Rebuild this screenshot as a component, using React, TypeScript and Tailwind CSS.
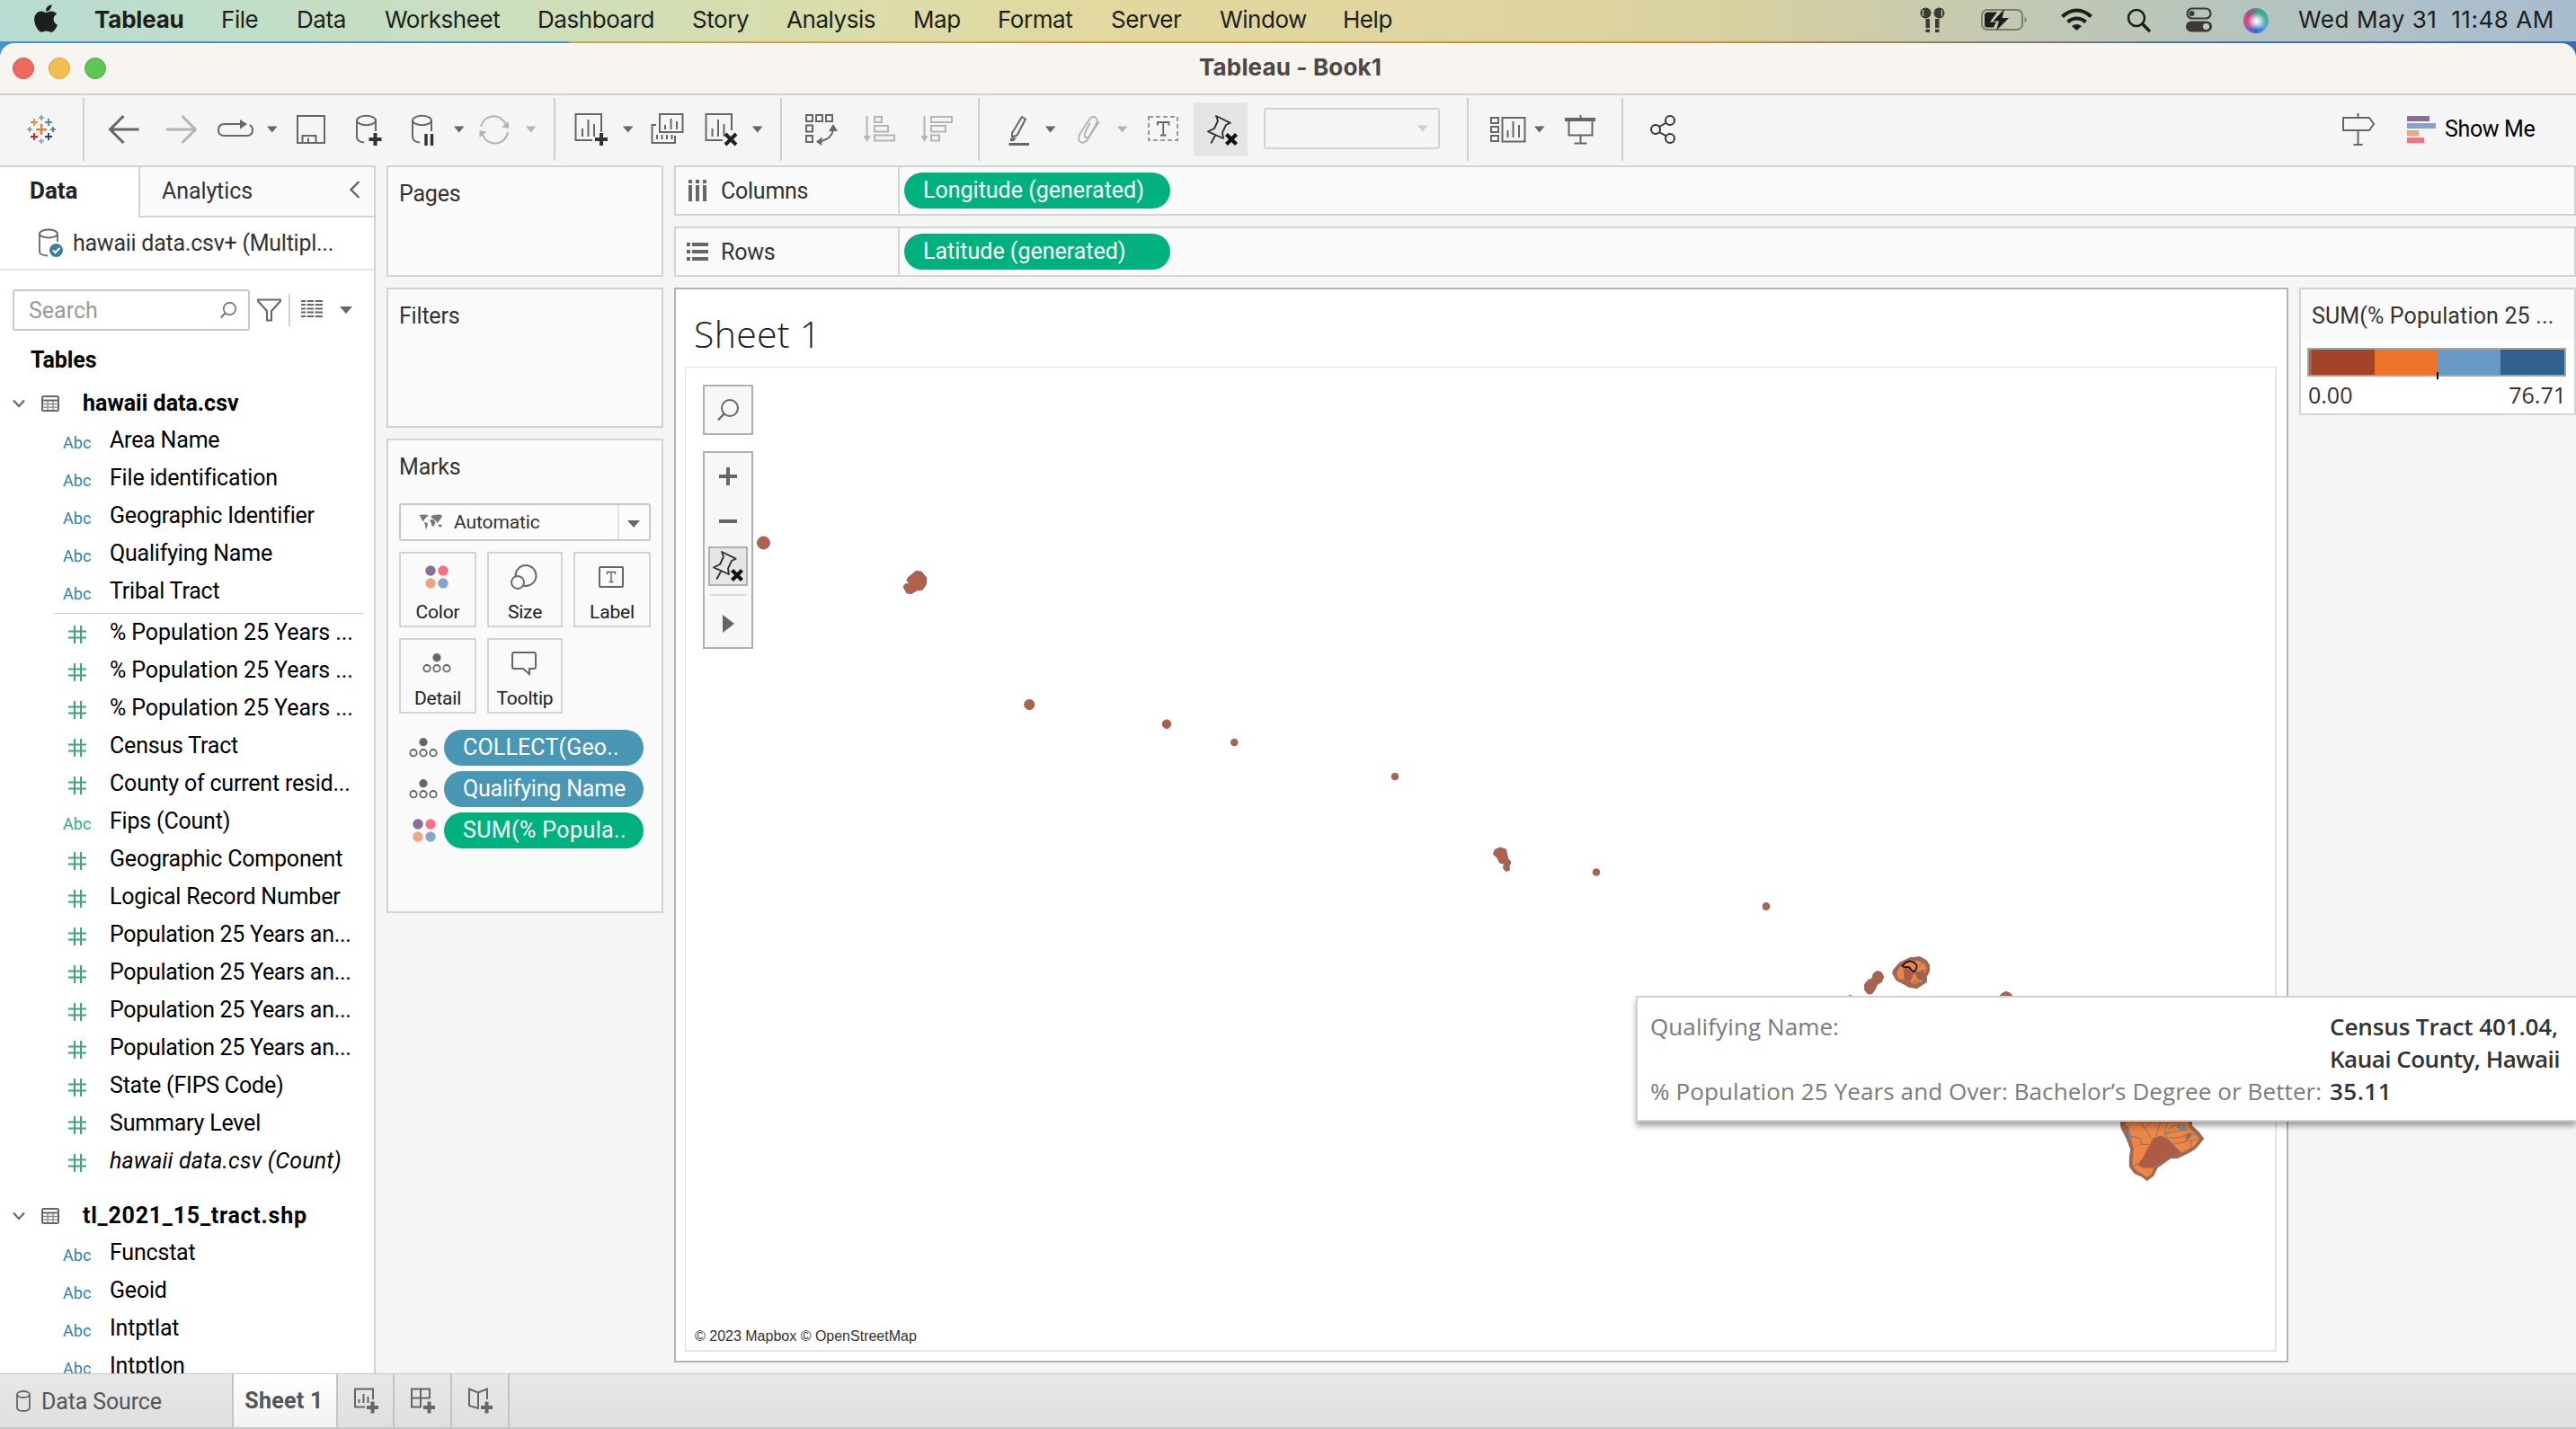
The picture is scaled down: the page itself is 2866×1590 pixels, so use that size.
import React from 'react';
import { FaApple } from 'react-icons/fa';

const ui = "font-['Roboto','Liberation_Sans',sans-serif]";

type IcProps = { x: number; w: number; y?: number; h?: number; c?: string; children: React.ReactNode };

/* Icons are drawn on a window-wide grid; x/y/w/h choose the part of it that the icon covers. */
function Ic({ x, w, y = 124, h = 40, c = '', children }: IcProps) {
  return (
    <svg
      width={w}
      height={h}
      viewBox={`${x} ${y} ${w} ${h}`}
      fill="none"
      stroke="currentColor"
      strokeWidth={2}
      className={`block shrink-0 ${c}`}
    >
      {children}
    </svg>
  );
}

const Caret = ({ c }: { c: string }) => (
  <svg width={14} height={8} viewBox="0 0 14 8" className={`block shrink-0 ${c}`}>
    <path d="M1 0.5H12.5L6.7 7.5Z" fill="currentColor" />
  </svg>
);

const Sep = ({ c }: { c: string }) => <div className={`h-[70px] w-[2px] shrink-0 bg-[#d0d0d0] ${c}`} />;

const Plus = ({ x, y }: { x: number; y: number }) => (
  <path d={`M${x - 7} ${y}H${x + 7}M${x} ${y - 7}V${y + 7}`} stroke="#333" strokeWidth={4} />
);

const PinPaths = () => (
  <>
    <path d="M803 614L818.7 621.7L814 624L810 632.5L811 639L794 631.3L801 628L805 619.5Z" strokeWidth={1.9} strokeLinejoin="round" />
    <path d="M802.5 635L797.3 644.5" strokeWidth={1.9} />
    <path d="M814.5 634.5L825.5 645.5M825.5 634.5L814.5 645.5" stroke="#111" strokeWidth={4.2} />
  </>
);

function MenuBar() {
  const item = 'shrink-0 whitespace-pre';
  return (
    <div
      className="flex h-[46px] shrink-0 items-center bg-[linear-gradient(90deg,#b8dcd2_0%,#c6dfc3_15%,#dbdda9_33%,#e2d89e_44%,#dfd49e_60%,#d6d0a2_68%,#c1c8b4_79%,#b2c3c2_90%,#a7bccf_100%)] font-['Inter',sans-serif] text-[26px] leading-[46px] tracking-[-0.45px] text-[#1d1f1c]"
    >
      <FaApple className="ml-[37px] h-[35px] w-[28px] shrink-0 -translate-y-[3px]" />
      <div className={`${item} ml-[40px] w-[141px] font-bold tracking-[-0.2px] -translate-y-[1px]`}>Tableau</div>
      <div className="flex -translate-y-[1px]">
        <div className={`${item} w-[84px]`}>File</div>
        <div className={`${item} w-[98px]`}>Data</div>
        <div className={`${item} w-[170px]`}>Worksheet</div>
        <div className={`${item} w-[172px]`}>Dashboard</div>
        <div className={`${item} w-[105px]`}>Story</div>
        <div className={`${item} w-[141px]`}>Analysis</div>
        <div className={`${item} w-[94px]`}>Map</div>
        <div className={`${item} w-[126px]`}>Format</div>
        <div className={`${item} w-[121px]`}>Server</div>
        <div className={`${item} w-[137px]`}>Window</div>
        <div className={`${item} w-[64px]`}>Help</div>
      </div>
      <Ic x={2136} w={30} y={0} h={46} c="ml-[578px]">
        <g fill="#3a3b35" stroke="none">
          <ellipse cx="2142.5" cy="14.5" rx="6" ry="6" />
          <ellipse cx="2157.5" cy="14.5" rx="6" ry="6" />
          <path d="M2142.5 21H2147V31H2142.5ZM2153 21H2157.5V31H2153Z" />
          <path d="M2142.5 32.5H2147V36H2142.5ZM2153 32.5H2157.5V36H2153Z" />
        </g>
        <path d="M2139.5 11V18M2160.5 11V18" stroke="#cfcbae" strokeWidth={1.2} />
      </Ic>
      <Ic x={2202} w={56} y={0} h={46} c="ml-[36px]">
        <rect x="2205" y="11" width="45" height="22" rx="6" stroke="#7d7e6c" strokeWidth={2} />
        <path d="M2252.5 18.5Q2257 22 2252.5 25.5Z" fill="#7d7e6c" stroke="none" />
        <path d="M2212 13.5H2222L2214 24.5H2221L2218 30.5H2211Q2208 30.5 2208 27.500V17Q2208 13.500 2212 13.500Z" fill="#1d1f1c" stroke="none" />
        <path d="M2230 10L2217.500 23.500H2224L2221 34L2235 20H2227.500Z" fill="#1d1f1c" stroke="none" />
      </Ic>
      <Ic x={2290} w={42} y={0} h={46} c="ml-[32px]">
        <g stroke="#1d1f1c" strokeWidth={4.2}>
          <path d="M2294.500 18.500Q2302 11.500 2310.500 11.500Q2319 11.500 2326.500 18.500" />
          <path d="M2300.500 24.500Q2305 20.500 2310.500 20.500Q2316 20.500 2320.500 24.500" />
        </g>
        <path d="M2305 29Q2310.500 25 2316 29L2310.500 34Z" fill="#1d1f1c" stroke="none" />
      </Ic>
      <Ic x={2364} w={32} y={0} h={46} c="ml-[32px]">
        <circle cx="2377" cy="20" r="9" stroke="#1d1f1c" strokeWidth={2.6} />
        <path d="M2383.500 26.500L2391 34" stroke="#1d1f1c" strokeWidth={3.400} strokeLinecap="round" />
      </Ic>
      <Ic x={2430} w={34} y={0} h={46} c="ml-[34px]">
        <rect x="2433.500" y="9.500" width="26" height="11" rx="5.500" stroke="#3a3b35" strokeWidth={2.200} />
        <circle cx="2438.500" cy="15" r="3" fill="#3a3b35" stroke="none" />
        <rect x="2432" y="23.500" width="29" height="12" rx="6" fill="#3a3b35" stroke="none" />
        <circle cx="2454.500" cy="29.500" r="3.600" fill="#c3cabb" stroke="none" />
      </Ic>
      <div className="ml-[32px] size-[28px] shrink-0 rounded-full bg-[radial-gradient(circle_at_52%_52%,#ffffff_0%,rgba(255,255,255,0.75)_16%,rgba(255,255,255,0)_48%),conic-gradient(from_0deg,#3b9a86,#4cae9c_20%,#5aa4e0_35%,#2c66d0_50%,#8b5fc0_62%,#e0467e_75%,#b24d80_88%,#3b9a86)]" />
      <div className="ml-[33px] -translate-y-[1px] whitespace-pre tracking-[0.55px]">{'Wed May 31  11:48 AM'}</div>
    </div>
  );
}

function TitleBar() {
  return (
    <div className="shrink-0 bg-[linear-gradient(90deg,#4a93c8_0%,#4a93c8_22%,#c9a857_22.200%,#c98f3a_66%,#3f6fa8_88%,#3a6ca8_100%)] pt-[2px]">
      <div className="flex h-[58px] items-center rounded-t-[16px] border-b-2 border-[#d2d0cd] bg-[#f8f4ef]">
        <div className="ml-[14px] flex gap-[16px]">
          <div className="size-[24px] rounded-full border border-[#d2564b] bg-[#ec6a5e]" />
          <div className="size-[24px] rounded-full border border-[#d9a13e] bg-[#f5bf4f]" />
          <div className="size-[24px] rounded-full border border-[#4fa73f] bg-[#61c554]" />
        </div>
        <div className="ml-[1216px] pb-[3px] font-['Inter',sans-serif] text-[26px] font-bold tracking-[0.15px] whitespace-pre text-[#4b4845]">Tableau - Book1</div>
      </div>
    </div>
  );
}

function SheetBars({ x }: { x: number }) {
  return <path d={`M${x} 143V152M${x + 6.5} 133V152M${x + 13} 138V152`} />;
}

function Toolbar() {
  const g = 'text-[#666]';
  const l = 'text-[#b4b4b4]';
  const cross = (x: number, y: number, col: string, k: string) => (
    <path key={k} d={`M${x - 4} ${y}H${x + 4}M${x} ${y - 4}V${y + 4}`} stroke={col} strokeWidth={1.9} />
  );
  return (
    <div className="flex h-[78px] shrink-0 items-center bg-[#f5f5f5] pb-[2px] text-[#666]">
      <Ic x={29} w={34} c="ml-[29px]">
        <path d="M40 144H52M46 138V150" stroke="#e8762c" strokeWidth={2.2} />
        {cross(38, 136, '#eb912b', 'a')}
        {cross(54, 136, '#59879b', 'b')}
        {cross(38, 152, '#c72037', 'c')}
        {cross(54, 152, '#1f447e', 'd')}
        <path d="M43 131H49M46 128V134M30 144H36M33 141V147" stroke="#7199a6" strokeWidth={1.6} />
        <path d="M43 157H49M46 154V160" stroke="#8e9bbf" strokeWidth={1.6} />
        <path d="M56 144H62M59 141V147" stroke="#5b6591" strokeWidth={1.6} />
      </Ic>
      <Sep c="ml-[29px]" />
      <Ic x={120} w={36} c="ml-[26px]"><path d="M154.500 144H123M137.500 129L122.500 144L137.500 159" strokeWidth={3} /></Ic>
      <Ic x={184} w={36} c={`ml-[28px] ${l}`}><path d="M185 144H217M202.500 129L217.500 144L202.500 159" strokeWidth={3} /></Ic>
      <Ic x={240} w={44} c="ml-[20px]">
        <path d="M267 138H250Q243 138 243 144.500Q243 151 250 151H274Q281 151 281 144.500Q281 141 278 139" />
        <path d="M267 133L275 138L267 143.500Z" fill="currentColor" stroke="none" />
      </Ic>
      <Caret c="ml-[12px]" />
      <Ic x={330} w={32} c="ml-[20px]">
        <path d="M331 129H361V159H331Z" />
        <path d="M336.500 159V151H351.500V159M343 159V153.500" />
      </Ic>
      <Ic x={396} w={30} c="ml-[34px]">
        <ellipse cx="407.500" cy="134" rx="10.500" ry="5.200" />
        <path d="M397 134V152Q397 158 405 158.500M418 134V146" />
        <Plus x={417.500} y={155} />
      </Ic>
      <Ic x={458} w={26} c="ml-[32px]">
        <ellipse cx="469.500" cy="134" rx="10.500" ry="5.200" />
        <path d="M459 134V152Q459 158 467 158.500M480 134V146" />
        <path d="M474 149V162M480.500 149V162" stroke="#333" strokeWidth={3.400} />
      </Ic>
      <Caret c="ml-[20px]" />
      <Ic x={532} w={36} c={`ml-[14px] ${l}`}>
        <path d="M535 141A14.500 14.500 0 0 1 562.500 138M565 147A14.500 14.500 0 0 1 537 150" />
        <path d="M558 141.500L566 135V143ZM541.500 146.500L533.500 145V153Z" fill="currentColor" stroke="none" />
      </Ic>
      <Caret c={`ml-[16px] ${l}`} />
      <Sep c="ml-[18px]" />
      <Ic x={638} w={40} c="ml-[20px]">
        <path d="M659 156H640.500V127H669V147" /><SheetBars x={648} />
        <Plus x={669} y={155} />
      </Ic>
      <Caret c="ml-[14px]" />
      <Ic x={724} w={38} c="ml-[18px]">
        <path d="M734 127H759.500V147H734ZM730 139H725.500V159H751V151" />
        <path d="M740 139V144M746.500 132V144M753 135V144M731 150V155M736.500 150V155M742 150V155M747.500 150V155" />
      </Ic>
      <Ic x={784} w={38} c="ml-[22px]">
        <path d="M804 156H785.500V127H814V145" /><SheetBars x={792.500} />
        <path d="M807 149L819 161M819 149L807 161" stroke="#222" strokeWidth={4} />
      </Ic>
      <Caret c="ml-[14px]" />
      <Sep c="ml-[18px]" />
      <Ic x={894} w={40} c="ml-[24px]">
        <path d="M897 128H904V135H897ZM908 128H915V135H908ZM919 128H926V135H919ZM897 139.500H904V146.500H897ZM897 151H904V158H897Z" />
        <path d="M927 143Q926 155 912 157" />
        <path d="M922 146L927 138L932 146ZM915 152.500L908 157.500L914 162Z" fill="currentColor" stroke="none" />
      </Ic>
      <Ic x={960} w={38} c={`ml-[26px] ${l}`}>
        <path d="M964.500 129V154M973 130H981V136H973ZM973 140H988V146.500H973ZM973 150.500H995V156.500H973Z" />
        <path d="M960.500 151H968.500L964.500 158Z" fill="currentColor" stroke="none" />
      </Ic>
      <Ic x={1024} w={38} c={`ml-[26px] ${l}`}>
        <path d="M1028.500 129V154M1036 130H1059V136H1036ZM1036 140H1052V146.500H1036ZM1036 150.500H1045V156.500H1036Z" />
        <path d="M1024.500 151H1032.500L1028.500 158Z" fill="currentColor" stroke="none" />
      </Ic>
      <Sep c="ml-[26px]" />
      <Ic x={1122} w={24} c="ml-[32px]">
        <path d="M1137 130L1141 132.500L1131.500 150.500L1126 152.500L1126 148Z" strokeLinejoin="round" />
        <path d="M1124 154L1131 153L1128 157L1124 157Z" fill="currentColor" stroke="none" />
        <path d="M1122.500 160.500H1145" strokeWidth={3} />
      </Ic>
      <Caret c="ml-[16px]" />
      <Ic x={1198} w={28} c={`ml-[22px] ${l}`}>
        <path d="M1212.500 137L1207 148Q1205.500 152.500 1208.500 153Q1211 153.500 1212.500 150.500L1219.500 138Q1222 132 1218.500 130.500Q1214.500 129 1212 133L1202 148Q1198 156 1202 158Q1206 160 1209.500 156L1222.500 136" strokeLinecap="round" strokeWidth={1.900} />
      </Ic>
      <Caret c={`ml-[16px] ${l}`} />
      <Ic x={1276} w={36} c="ml-[20px]">
        <path d="M1278 130H1310V156H1278Z" strokeDasharray="5 3" stroke="#999" />
        <path d="M1288 139.500V136H1300.500V139.500M1294.200 136V150.500M1291 150.500H1297.500" strokeWidth={1.800} />
      </Ic>
      <div className="ml-[16px] flex h-[60px] w-[60px] shrink-0 items-center justify-center bg-[#e5e5e5] text-[#333]">
        <Ic x={786} w={44} y={607} h={44}><PinPaths /></Ic>
      </div>
      <div className="ml-[18px] flex h-[46px] w-[196px] shrink-0 -translate-y-[1px] items-center justify-end rounded-[3px] border-2 border-[#d3d3d3] pr-[10px]">
        <Caret c="text-[#cfcfcf]" />
      </div>
      <Sep c="ml-[30px]" />
      <Ic x={1658} w={40} c="ml-[24px]">
        <path d="M1659 131H1667V137H1659ZM1659 141H1667V147H1659ZM1659 151H1667V157H1659ZM1671.500 131H1696.500V157.500H1671.500Z" />
        <path d="M1677.500 145V153M1683.500 135V153M1690 139V153" />
      </Ic>
      <Caret c="ml-[8px]" />
      <Ic x={1740} w={36} c="ml-[20px]">
        <path d="M1741 133H1775" strokeWidth={4} />
        <path d="M1745.500 135V150.500H1771.500V135M1758.500 128V133M1758.500 151V159M1751.500 159.500H1765.500" />
      </Ic>
      <Sep c="ml-[28px]" />
      <Ic x={1836} w={30} c="ml-[30px] text-[#333]">
        <circle cx="1842" cy="144" r="5" /><circle cx="1858" cy="134" r="5" /><circle cx="1858" cy="154" r="5" />
        <path d="M1846 141L1854 136.500M1846 147L1854 151.500" />
      </Ic>
      <Ic x={2606} w={38} c={`ml-[740px] ${g}`}>
        <path d="M2607 131H2636L2641 138L2636 145H2607ZM2623.500 126V131M2623.500 145V161M2618.500 161H2628.500" />
      </Ic>
      <div className="ml-[34px] flex flex-col gap-[2px]">
        <div className="h-[6px] w-[25px] bg-[#876f99]" />
        <div className="h-[6px] w-[32px] bg-[#83a4cb]" />
        <div className="h-[6px] w-[13px] bg-[#f2a57d]" />
        <div className="h-[6px] w-[19px] bg-[#f97080]" />
      </div>
      <div className={`${ui} ml-[10px] whitespace-nowrap text-[25px] tracking-[-0.35px] text-black`}>Show Me</div>
    </div>
  );
}

const Cyl = () => (
  <svg width={28} height={34} viewBox="0 0 28 34" fill="none" stroke="#666" strokeWidth={1.8} className="block shrink-0">
    <ellipse cx="11" cy="6" rx="10" ry="4.500" />
    <path d="M1 6V26Q1 30 10 30.500M21 6V15" />
    <circle cx="19.500" cy="24.500" r="7.500" fill="#3a7fa0" stroke="none" />
    <path d="M16 24.500L18.500 27L23.500 22" stroke="#fff" strokeWidth={2} />
  </svg>
);

const Mag = ({ s }: { s: number }) => (
  <svg width={s} height={s} viewBox="0 0 24 24" fill="none" stroke="#666" strokeWidth={2} className="block shrink-0">
    <circle cx="14" cy="10" r="9" />
    <path d="M7.500 16.500L1 23.300" strokeWidth={2.400} />
  </svg>
);

function TableHead({ name }: { name: string }) {
  return (
    <div className="flex h-[42px] items-center">
      <svg width={14} height={10} viewBox="0 0 14 10" fill="none" stroke="#666" strokeWidth={2.2} className="ml-[14px] block shrink-0"><path d="M1 1.500L7 8L13 1.500" /></svg>
      <svg width={20} height={18} viewBox="0 0 20 18" fill="none" stroke="#666" className="ml-[18px] block shrink-0">
        <rect x="1" y="1" width="18" height="16" rx="1.500" strokeWidth={2} />
        <path d="M1 5.500H19" strokeWidth={2} />
        <path d="M2 9.500H18M2 13.200H18M7 6V16M13 6V16" strokeWidth={1.300} stroke="#888" />
      </svg>
      <div className="ml-[26px] whitespace-nowrap text-[25px] font-bold text-black">{name}</div>
    </div>
  );
}

function Field({ t, name, green }: { t: 'abc' | '#'; name: string; green?: boolean }) {
  let track = 'tracking-[-0.2px]';
  if (name.startsWith('Population')) track = 'tracking-[-0.3px]';
  if (name.startsWith('%')) track = 'tracking-[-0.1px]';
  if (name === 'hawaii data.csv (Count)') track = 'tracking-[0.15px] italic';
  return (
    <div className="flex h-[42px] items-center">
      <div className="ml-[70px] flex w-[52px] shrink-0">
        {t === 'abc' ? (
          <span className={green ? 'mt-[4px] text-[18px] tracking-[0.1px] text-[#3aa873]' : 'mt-[4px] text-[18px] tracking-[0.1px] text-[#3a7fa0]'}>Abc</span>
        ) : (
          <svg width={20} height={20} viewBox="0 0 20 20" fill="none" stroke="#3aa873" strokeWidth={2} className="mt-[3px] ml-[6px] block">
            <path d="M7 0V20M14 0V20M0 6.500H20M0 13.500H20" />
          </svg>
        )}
      </div>
      <div className={`whitespace-nowrap text-[25px] ${track}`}>{name}</div>
    </div>
  );
}

function DataPane() {
  const measures = [
    '% Population 25 Years ...', '% Population 25 Years ...', '% Population 25 Years ...', 'Census Tract', 'County of current resid...', 'Fips (Count)',
    'Geographic Component', 'Logical Record Number', 'Population 25 Years an...', 'Population 25 Years an...', 'Population 25 Years an...',
    'Population 25 Years an...', 'State (FIPS Code)', 'Summary Level', 'hawaii data.csv (Count)',
  ];
  return (
    <div className={`${ui} h-[1344px] w-[418px] shrink-0 overflow-hidden border-t-2 border-r-2 border-[#d3d3d3] bg-white text-[25px] text-black`}>
      <div className="flex h-[56px]">
        <div className="w-[154px] pt-[10px] pl-[33px] text-[26px] leading-[32px] font-bold text-[#222]">Data</div>
        <div className="flex flex-1 border-b-2 border-l-2 border-[#d3d3d3] bg-[#fafafa] pt-[11px] pl-[24px] leading-[32px] tracking-[-0.1px] text-[#333]">
          <div className="w-[209px]">Analytics</div>
          <svg width={12} height={20} viewBox="0 0 12 20" fill="none" stroke="#666" strokeWidth={2.400} className="mt-[4px] block"><path d="M10.500 1L1.500 10L10.500 19" /></svg>
        </div>
      </div>
      <div className="flex h-[59px] items-center border-b-2 border-[#e3e3e3] text-[#333]">
        <div className="ml-[43px]"><Cyl /></div>
        <div className="ml-[10px] whitespace-nowrap tracking-[-0.25px]">hawaii data.csv+ (Multipl...</div>
      </div>
      <div className="mt-[21px] flex h-[46px] items-center">
        <div className="ml-[14px] flex h-[46px] w-[264px] shrink-0 items-center justify-between rounded-[3px] border-2 border-[#c8c8c8] pr-[13px] pl-[16px] text-[#9a9a9a]">
          <span className="pt-[2px]">Search</span> <Mag s={18} />
        </div>
        <svg width={27} height={26} viewBox="0 0 27 26" fill="none" stroke="#666" strokeWidth={2} strokeLinejoin="round" className="ml-[8px] block shrink-0"><path d="M1 1.500H26V3L16 14V24.500H11V14L1 3Z" /></svg>
        <div className="ml-[8px] h-[36px] w-[2px] bg-[#d0d0d0]" />
        <svg width={24} height={19} viewBox="0 0 24 19" stroke="#666" strokeWidth={2} className="-mt-[4px] ml-[12px] block shrink-0">
          <path d="M0 1H24M0 5H24M0 9.500H24M0 13.500H24M0 18H24" strokeDasharray="5 1.500 7.500 1.500 8.500 99" />
        </svg>
        <svg width={14} height={8} viewBox="0 0 14 8" className="ml-[19px] block shrink-0"><path d="M0 0H14L7 8Z" fill="#666" /></svg>
      </div>
      <div className="mt-[17px] ml-[34px] leading-[32px] font-bold tracking-[-0.1px]">Tables</div>
      <div className="mt-[11px]"><TableHead name="hawaii data.csv" /></div>
      <div className="-mt-[1px]">
        <Field t="abc" name="Area Name" />
        <Field t="abc" name="File identification" />
        <Field t="abc" name="Geographic Identifier" />
        <Field t="abc" name="Qualifying Name" />
        <Field t="abc" name="Tribal Tract" />
      </div>
      <div className="mt-[3px] ml-[60px] h-[1px] w-[345px] bg-[#d0d0d0]" />
      {measures.map((m, i) => (
        <Field key={i} t={m === 'Fips (Count)' ? 'abc' : '#'} green name={m} />
      ))}
      <div className="mt-[19px] tracking-[0.75px]"><TableHead name="tl_2021_15_tract.shp" /></div>
      <div className="-mt-[1px]">
        <Field t="abc" name="Funcstat" />
        <Field t="abc" name="Geoid" />
        <Field t="abc" name="Intptlat" />
        <Field t="abc" name="Intptlon" />
      </div>
    </div>
  );
}

const Dots = () => (
  <svg width={26} height={26} viewBox="0 0 26 26" className="block shrink-0">
    <circle cx="6" cy="6" r="5.700" fill="#876f99" /><circle cx="20" cy="6" r="5.700" fill="#f97080" />
    <circle cx="6" cy="20" r="5.700" fill="#f2a57d" /><circle cx="20" cy="20" r="5.700" fill="#83a4cb" />
  </svg>
);

const Detail = () => (
  <svg width={32} height={22} viewBox="0 0 32 22" fill="none" stroke="#666" strokeWidth={1.800} className="block shrink-0">
    <circle cx="16" cy="4.700" r="4.600" fill="#666" stroke="none" />
    <circle cx="5" cy="16.700" r="3.700" /><circle cx="16" cy="16.700" r="3.700" /><circle cx="27" cy="16.700" r="3.700" />
  </svg>
);

function MarkButton({ label, w, children }: { label: string; w: string; children: React.ReactNode }) {
  return (
    <div className={`${w} flex h-[84px] flex-col items-center border-2 border-[#d3d3d3] bg-[#fafafa]`}>
      <div className="flex h-[52px] items-center justify-center pr-[2px]">{children}</div>
      <div className="text-[21px] leading-[26px] text-[#222]">{label}</div>
    </div>
  );
}

function Pill({ c, children }: { c: string; children: React.ReactNode }) {
  return <div className={`${c} flex h-[40px] items-center rounded-full pl-[21px] whitespace-nowrap text-white`}>{children}</div>;
}

function Cards() {
  const card = 'border-2 border-[#d3d3d3] bg-[#fafafa] pt-[14px] pl-[12px] leading-[32px]';
  return (
    <div className={`${ui} ml-[12px] flex w-[308px] shrink-0 flex-col gap-[12px] text-[25px] tracking-[-0.2px] text-[#333]`}>
      <div className={`${card} h-[124px]`}>Pages</div>
      <div className={`${card} h-[156px]`}>Filters</div>
      <div className={`${card} h-[528px]`}>
        Marks
        <div className="mt-[24px] flex h-[42px] w-[280px] items-center rounded-[3px] border-2 border-[#c8c8c8] bg-[#fcfcfc]">
          <svg width={27} height={18} viewBox="0 0 27 18" fill="#777" className="ml-[20px] block shrink-0">
            <path d="M0 1L7 0.500L11 1.500L8 4L6 6L5 8.500L3 6L2 3ZM6 9L10 10L9.500 13L8 17.500L7 13ZM13 3L16 1L24 0.500L26 2L24.500 5L22 8L20.500 10.500L19 7.500L16 5.500ZM12 6.500L16 6L18.500 9L16.500 14L14.500 13L13.500 9.500ZM21.500 12L25 11.500L25.500 14.500L22 14Z" />
          </svg>
          <div className="ml-[12px] w-[182px] text-[21px] tracking-[-0.1px]">Automatic</div>
          <div className="h-full w-[2px] bg-[#e0e0e0]" />
          <svg width={14} height={8} viewBox="0 0 14 8" className="mt-[4px] ml-[9px] block shrink-0"><path d="M0 0H14L7 8Z" fill="#666" /></svg>
        </div>
        <div className="mt-[12px] flex gap-[12px]">
          <MarkButton label="Color" w="w-[86px]"><Dots /></MarkButton>
          <MarkButton label="Size" w="w-[84px]">
            <svg width={30} height={28} viewBox="0 0 30 28" fill="none" stroke="#666" strokeWidth={1.900} className="block">
              <circle cx="17" cy="12.500" r="11.500" /><circle cx="8" cy="20" r="7" fill="#fafafa" />
            </svg>
          </MarkButton>
          <MarkButton label="Label" w="w-[86px]">
            <svg width={28} height={24} viewBox="0 0 28 24" fill="none" stroke="#666" strokeWidth={2} className="block">
              <rect x="1" y="1" width="26" height="22" rx="1" />
              <path d="M9.500 9V6.500H18.500V9M14 6.500V17.500M11.500 17.500H16.500" strokeWidth={1.500} />
            </svg>
          </MarkButton>
        </div>
        <div className="mt-[12px] flex gap-[12px]">
          <MarkButton label="Detail" w="w-[86px]"><Detail /></MarkButton>
          <MarkButton label="Tooltip" w="w-[84px]">
            <svg width={28} height={27} viewBox="0 0 28 27" fill="none" stroke="#666" strokeWidth={2} className="block">
              <path d="M3 1H25Q27 1 27 3V17Q27 19 25 19H20V25L13 19H3Q1 19 1 17V3Q1 1 3 1Z" />
            </svg>
          </MarkButton>
        </div>
        <div className="mt-[18px] flex flex-col gap-[6px]">
          <div className="flex items-center gap-[7px] pl-[11px]"><Detail /><Pill c="w-[222px] bg-[#4a96b5] tracking-[0.15px]">COLLECT(Geo..</Pill></div>
          <div className="flex items-center gap-[7px] pl-[11px]"><Detail /><Pill c="w-[222px] bg-[#4a96b5]">Qualifying Name</Pill></div>
          <div className="flex items-center gap-[9px] pl-[15px]"><Dots /><Pill c="w-[222px] bg-[#00b180] tracking-[0.4px]">SUM(% Popula..</Pill></div>
        </div>
      </div>
    </div>
  );
}

function Shelf({ icon, label, pill }: { icon: React.ReactNode; label: string; pill: string }) {
  return (
    <div className={`${ui} flex h-[56px] items-center border-2 border-[#d3d3d3] bg-[#fafafa] text-[25px]`}>
      <div className="flex h-full w-[249px] items-center border-r-2 border-[#d3d3d3] text-[#333]">
        <div className="ml-[12px] w-[38px]">{icon}</div>
        <div className="pt-[2px] tracking-[-0.25px]">{label}</div>
      </div>
      <div className="ml-[5px]"><Pill c="w-[296px] bg-[#00b180]">{pill}</Pill></div>
    </div>
  );
}

function Islands() {
  const dots: [number, number, number][] = [
    [849.5, 604, 7], [1145.3, 784, 5.6], [1298, 805.7, 4.8], [1373.3, 826, 3.8], [1552, 864, 3.8], [1776, 970.5, 3.8], [1965, 1008.5, 4],
  ];
  return (
    <svg width={1768} height={1094} viewBox="763 409 1768 1094" className="absolute inset-0 block" stroke="#7a7068" strokeWidth={1} fill="#b2604a">
      {dots.map(([x, y, r]) => <circle key={x} cx={x} cy={y} r={r} />)}
      <path d="M1019 635.500L1025 636L1031 643L1030 651L1026 656.500L1020 657L1014 660.500L1009 660L1005 653L1007.500 649.500L1012 650L1009 646L1010 643Z" />
      <path d="M1669 943L1675.500 945L1677.500 955L1681 959L1679 964L1679.500 968L1675.500 969.500L1672.500 966L1673.500 961L1668.500 960L1665.500 954L1661.500 950.500L1663 945.500Z" />
      <g transform="translate(2030 1040) scale(0.33333)" strokeWidth={3}>
        <path d="M176 121L190 126L197 141L190 158L176 166L167 185L158 197L145 198L134 185L134 165L145 152L158 147L163 130Z" />
        <path d="M181 136L184 150L168 162L160 180L150 188L146 175L154 162L170 155L174 140Z" fill="none" />
        <path d="M285 77L318 74L340 86L350 102L349 124L341 138L340 158L308 179L280 174L265 165L240 152L227 130L230 117L250 94Z" />
        <path d="M290 86L316 87L335 98L341 112L332 135L325 158L305 169L288 160L265 152L245 147L240 130L247 110L262 98Z" fill="#ec8545" strokeWidth={2} />
        <path d="M264 105L275 106L298 124L283 160L266 150Z" fill="#ae5b46" strokeWidth={2} />
        <path d="M298 124L330 122L334 135L328 152L312 148Z" fill="#ae5b46" strokeWidth={2} />
        <path d="M298 124L328 95M298 124L283 160M310 140L334 132M305 150L304 168M312 128L330 145M320 120L335 118M292 158L322 160M314 152V166" fill="none" strokeWidth={2.400} />
        <path d="M259 104L272 92L284 88L298 92L308 103L305 116L298 124L290 117L281 107L265 108Z" fill="#ec8545" stroke="#000" strokeWidth={4.500} />
        <path d="M78 206Q85 198 93 206ZM584 206L592 196L606 190L620 196L628 206Z" />
        <path d="M985 590L1222 590L1226 638L1250 660L1265 681L1240 712L1222 724L1180 745L1155 746L1110 778L1098 804L1076 821L1060 808L1034 796L1018 774L1018 745L1022 716L1008 680L990 645Z" />
        <path d="M1000 590L1214 590L1218 645L1238 664L1254 683L1230 710L1190 730L1155 738L1100 778L1092 800L1076 811L1040 788L1026 772L1030 715L1018 670L1004 640Z" fill="#ec8545" strokeWidth={2} />
        <path d="M1120 673L1135 677L1155 692L1165 705L1190 727L1155 738L1095 778L1062 777L1045 767L1062 748L1070 730L1090 696L1097 680Z" fill="#ae5b46" strokeWidth={2} />
        <path d="M1026 774L1045 765M1056 625L1068 645L1090 680M1068 645L1090 625M1120 625L1106 675M1145 625L1134 665L1150 690M1134 665L1180 655L1215 650M1150 690L1165 700L1205 690L1252 683M1165 700L1170 712M1205 690L1215 665L1240 668M1225 685L1222 715M1190 630L1160 640L1140 665M1016 672L1058 680L1054 700L1090 700M1150 680L1190 676L1222 660" fill="none" strokeWidth={2.600} />
        <path d="M1178 640L1200 636L1205 648L1188 652ZM1012 655L1022 668L1024 682L1015 676Z" fill="#6899c4" strokeWidth={2} />
        <path d="M1205 672L1222 662L1222 675L1208 684ZM1002 636L1014 642L1016 662L1006 650Z" fill="#b2604a" strokeWidth={2} />
      </g>
    </svg>
  );
}

function Worksheet() {
  return (
    <div className="flex h-[1196px] w-[1796px] shrink-0 flex-col border-2 border-[#b3b3b3] bg-white">
      <div className="h-[86px] pt-[22px] pl-[20px] font-['Open_Sans',sans-serif] text-[41px] leading-[54px] font-light tracking-[0.3px] text-[#222]">Sheet 1</div>
      <div className="relative ml-[10px] flex h-[1096px] w-[1771px] flex-col border-t border-r-2 border-b-2 border-l border-[#e4e4e4]">
        <Islands />
        <div className="relative mt-[19px] ml-[19px] flex size-[56px] items-center justify-center border-2 border-[#b0b0b0] bg-[#f7f7f7]"><Mag s={24} /></div>
        <div className="relative mt-[18px] ml-[19px] flex h-[220px] w-[56px] flex-col items-center border-2 border-[#b0b0b0] bg-[#f7f7f7]">
          <svg width={20} height={20} viewBox="0 0 20 20" stroke="#666" strokeWidth={4} className="mt-[16px] block"><path d="M0 10H20M10 0V20" /></svg>
          <div className="mt-[38px] h-[4px] w-[20px] bg-[#666]" />
          <div className="mt-[26px] flex size-[44px] items-center justify-center border-2 border-[#b0b0b0] bg-[#e6e6e6] text-[#333]">
            <Ic x={790} w={40} y={610} h={40}><PinPaths /></Ic>
          </div>
          <div className="mt-[9px] h-[2px] w-[40px] bg-[#dcdcdc]" />
          <svg width={13} height={20} viewBox="0 0 13 20" className="mt-[21px] block"><path d="M0 0L13 10L0 20Z" fill="#666" /></svg>
        </div>
        <div className="mt-auto mb-[5px] ml-[10px] font-['Liberation_Sans',sans-serif] text-[16px] leading-[20px] text-[#333]">© 2023 Mapbox © OpenStreetMap</div>
      </div>
    </div>
  );
}

function Legend() {
  return (
    <div className="h-[142px] w-[308px] shrink-0 border-2 border-[#d3d3d3] bg-white text-[#333]">
      <div className={`${ui} h-[58px] bg-[#fafafa] pt-[14px] pl-[12px] text-[25px] leading-[32px] tracking-[0.15px] whitespace-nowrap`}>SUM(% Population 25 ...</div>
      <div className="relative mt-[7px] ml-[7px] flex h-[32px] w-[288px] border-2 border-[#aaa695]">
        <div className="w-[3px] bg-[#b2604a]" />
        <div className="w-[70px] bg-[#a3432a]" />
        <div className="w-[70px] bg-[#ec7329]" />
        <div className="w-[70px] bg-[#6899c4]" />
        <div className="flex-1 bg-[#32618e]" />
        <div className="absolute top-[25px] left-[142px] h-[8px] w-[2px] bg-black" />
      </div>
      <div className="flex justify-between pt-[2px] pr-[9px] pl-[8px] font-['Open_Sans',sans-serif] text-[25px] leading-[36px]"><span>0.00</span><span>76.71</span></div>
    </div>
  );
}

function BottomBar() {
  const cell = 'flex h-full items-center justify-center border-r-2 border-[#c4c4c4] pl-[2px]';
  const pl = <path d="M15 22H28M21.500 15.500V28.500" strokeWidth={4} />;
  return (
    <div className={`${ui} flex h-[62px] shrink-0 items-start border-t border-b-2 border-[#c6c6c6] bg-[linear-gradient(180deg,#e8e8e8,#dfdfdf)] text-[25px] text-[#555]`}>
      <div className="flex h-full w-[260px] items-center border-r-2 border-[#c4c4c4]">
        <svg width={16} height={24} viewBox="0 0 16 24" fill="none" stroke="#666" strokeWidth={1.800} className="ml-[18px] block"><ellipse cx="8" cy="4.500" rx="7" ry="3.500" /><path d="M1 4.500V19Q1 23 8 23Q15 23 15 19V4.500" /></svg>
        <div className="ml-[12px] pt-[2px] tracking-[-0.15px]">Data Source</div>
      </div>
      <div className="flex h-full w-[116px] items-center justify-center border-r-2 border-[#c4c4c4] bg-[linear-gradient(180deg,#ffffff,#f1f1f1)] pr-[2px] font-bold tracking-[0.3px]">Sheet 1</div>
      <div className={`${cell} w-[63px]`}>
        <svg width={30} height={30} viewBox="0 0 30 30" fill="none" stroke="#666" strokeWidth={2} className="block"><path d="M13 21.500H2V1.500H22V13M6.500 17V13M11.500 17V7M16.500 17V10" />{pl}</svg>
      </div>
      <div className={`${cell} w-[64px]`}>
        <svg width={30} height={30} viewBox="0 0 30 30" fill="none" stroke="#666" strokeWidth={2} className="block"><path d="M13 21.500H2V1.500H22V11.500H2M12 1.500V21.500" />{pl}</svg>
      </div>
      <div className={`${cell} w-[64px]`}>
        <svg width={30} height={30} viewBox="0 0 30 30" fill="none" stroke="#666" strokeWidth={2} className="block"><path d="M22 13V1.500L12 5.500L2 1.500V20L12 23V5.500" />{pl}</svg>
      </div>
    </div>
  );
}

function Tooltip() {
  return (
    <div className="absolute top-[1108px] left-[1820px] h-[140px] w-[1046px] overflow-visible border-y-2 border-l-2 border-[#d2d2d2] bg-white shadow-[0_5px_6px_rgba(0,0,0,0.35)]">
      <div className="grid grid-cols-[756px_1fr] pt-[14px] pl-[14px] font-['Open_Sans',sans-serif] text-[26px] leading-[36px] whitespace-nowrap text-[#7b7b7b]">
        <div className="tracking-[0.1px]">Qualifying Name:</div>
        <div className="font-semibold text-[#333]">
          <div className="tracking-[-0.1px]">Census Tract 401.04,</div>
          <div className="tracking-[-0.5px]">Kauai County, Hawaii</div>
        </div>
        <div className="tracking-[0.1px]">% Population 25 Years and Over: Bachelor’s Degree or Better:</div>
        <div className="font-semibold tracking-[0.5px] text-[#333]">35.11</div>
      </div>
    </div>
  );
}

export default function App() {
  return (
    <div className="relative flex h-[1590px] w-[2866px] flex-col overflow-hidden bg-[#f5f5f5]">
      <MenuBar />
      <TitleBar />
      <Toolbar />
      <div className="flex h-[1344px] shrink-0">
        <DataPane />
        <Cards />
        <div className="ml-[12px] flex flex-1 flex-col gap-[12px]">
          <Shelf
            label="Columns"
            pill="Longitude (generated)"
            icon={<svg width={24} height={24} viewBox="0 0 24 24" stroke="#666" strokeWidth={4} className="block"><path d="M4 0V24M12 0V24M20 0V24" strokeDasharray="4 2 18" /></svg>}
          />
          <Shelf
            label="Rows"
            pill="Latitude (generated)"
            icon={<svg width={24} height={20} viewBox="0 0 24 20" stroke="#666" strokeWidth={4} className="block"><path d="M0 2H24M0 10H24M0 18H24" strokeDasharray="4 2 18" /></svg>}
          />
          <div className="flex gap-[12px]">
            <Worksheet />
            <Legend />
          </div>
        </div>
      </div>
      <BottomBar />
      <Tooltip />
    </div>
  );
}
